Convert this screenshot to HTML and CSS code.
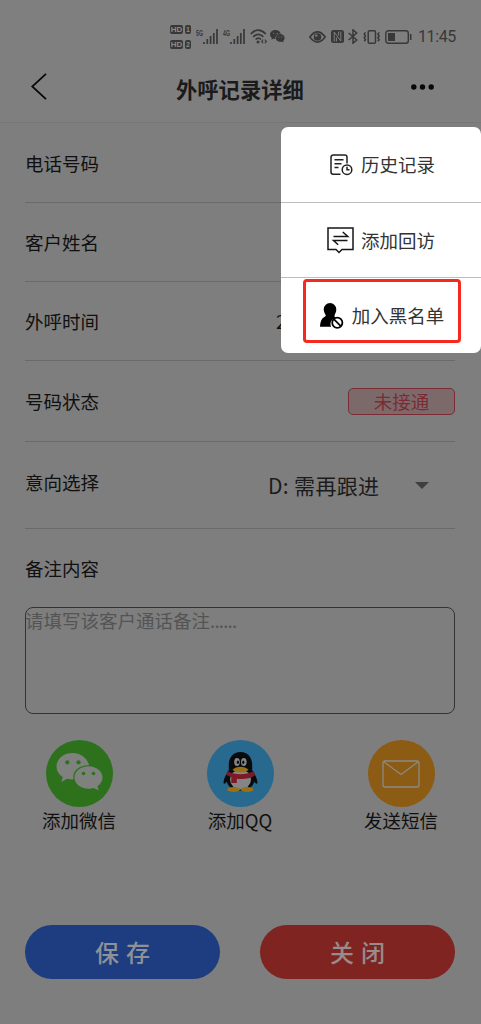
FILE: index.html
```html
<!DOCTYPE html>
<html lang="zh-CN">
<head>
<meta charset="utf-8">
<title>外呼记录详细</title>
<link rel="stylesheet" href="styles.css">
</head>
<body>
<div class="screen">
  <div class="statusbar">
    <div class="hd-stack">
      <div class="hd-row"><span class="hd">HD</span><span class="sim">1</span></div>
      <div class="hd-row"><span class="hd">HD</span><span class="sim">2</span></div>
    </div>
    <div class="signal">
      <span class="net">5G</span>
      <svg width="15" height="15" viewBox="0 0 15 15"><path d="M1 13v2M4.3 10v5M7.6 7v8M10.8 4v11M14 0v15"/></svg>
    </div>
    <div class="signal">
      <span class="net">4G</span>
      <svg width="15" height="15" viewBox="0 0 15 15"><path d="M1 13v2M4.3 10v5M7.6 7v8M10.8 4v11M14 0v15"/></svg>
    </div>
    <svg class="wifi" width="17" height="15" viewBox="0 0 17 15" fill="none" stroke="currentColor" stroke-width="1.7">
      <path d="M.7 5Q8.2-2.7 15.800 5M3.200 7.800q5-5 10.200 0M5.600 10.500q2.700-2.600 5.400 0"/>
      <circle cx="8" cy="13" r="1.500" fill="currentColor" stroke="none"/>
      <path d="M13.200 10.600L11.600 12.500l1.600 1.700M14.800 10.600l1.600 1.900-1.600 1.700" stroke-width="1.100"/>
    </svg>
    <svg class="chat" width="15" height="13" viewBox="0 0 15 13" fill="currentColor">
      <path d="M5.500 0C2.500 0 0 2 0 4.600c0 1.500.8 2.600 1.900 3.400L1.300 9.800l2-1 2 .3C5 5.800 7.400 3.500 10.800 3.700 10.200 1.500 8 0 5.500 0z"/>
      <ellipse cx="10.200" cy="8" rx="4.400" ry="3.900"/><path d="M11 11l2.500 1.500-.5-3z"/>
      <circle cx="3.700" cy="3.300" r=".6" fill="#7f7f7f"/><circle cx="7.200" cy="3.300" r=".6" fill="#7f7f7f"/>
      <circle cx="8.800" cy="7" r=".5" fill="#7f7f7f"/><circle cx="11.700" cy="7" r=".5" fill="#7f7f7f"/>
    </svg>
    <svg class="eye" width="17" height="12" viewBox="0 0 17 12" fill="none" stroke="currentColor" stroke-width="1.600">
      <path d="M.8 6Q8.500-4.200 16.200 6 8.500 16.200.8 6z"/><circle cx="8.500" cy="6" r="3.800" fill="currentColor" stroke="none"/><circle cx="7.300" cy="4.600" r="1.200" fill="#7f7f7f" stroke="none"/>
    </svg>
    <svg class="nfc" width="13" height="13" viewBox="0 0 13 13">
      <rect width="13" height="13" rx="2.500" fill="currentColor"/><path d="M3.200 11.500V2l6.600 9V1.500M5.400 11.500V7.500M7.600 1.500v4" fill="none" stroke="#7f7f7f" stroke-width="1"/>
    </svg>
    <svg class="bt" width="10" height="15" viewBox="0 0 10 15" fill="none" stroke="currentColor" stroke-width="1.500"><path d="M.7 4l8 7L5 14.200V.8l3.700 3.200-8 7"/></svg>
    <svg class="vib" width="18" height="14" viewBox="0 0 18 14" fill="none" stroke="currentColor" stroke-width="1.500">
      <rect x="5.200" y=".8" width="7.300" height="12.400" rx="1.300"/><path d="M2.500 2.300L1.200 4.200l1.300 1.700-1.300 1.900 1.300 1.900-1.300 1.600M16.200 2.300l-1.300 1.900 1.300 1.700-1.300 1.900 1.300 1.900-1.300 1.600"/>
    </svg>
    <svg class="battery" width="27" height="14" viewBox="0 0 27 14" fill="none" stroke="currentColor" stroke-width="1.400">
      <rect x=".8" y=".8" width="22.500" height="12.400" rx="2.500"/><rect x="3" y="3" width="7" height="8" fill="currentColor" stroke="none"/><path d="M25.700 4v6" stroke-width="1.600"/>
    </svg>
    <span class="clock">11:45</span>
  </div>

  <header class="header">
    <svg class="back" width="16" height="27" viewBox="0 0 16 27"><path d="M15 .8L1.200 13.500 15 26.200" fill="none" stroke="#080808" stroke-width="1.800"/></svg>
    <h1 class="title">外呼记录详细</h1>
    <svg class="more" width="23" height="6" viewBox="0 0 23 6"><circle cx="2.800" cy="3" r="2.700"/><circle cx="11.500" cy="3" r="2.700"/><circle cx="20.200" cy="3" r="2.700"/></svg>
  </header>

  <main class="form">
    <div class="row row-phone"><span>电话号码</span></div>
    <div class="row"><span>客户姓名</span></div>
    <div class="row"><span>外呼时间</span><span class="time">2</span></div>
    <div class="row row-state"><span>号码状态</span><span class="badge">未接通</span></div>
    <div class="row row-intent"><span class="intent-label">意向选择</span><span class="select">D: 需再跟进<i class="caret"></i></span></div>
    <div class="note-label">备注内容</div>
    <div class="note">请填写该客户通话备注<span class="dots">......</span></div>

    <div class="actions">
      <div class="action">
        <svg width="67" height="67" viewBox="0 0 67 67">
          <circle cx="33.500" cy="33.500" r="33.500" fill="#2d711d"/>
          <path d="M26.500 13C17.500 13 10.500 19 10.500 26.500c0 4.500 2.300 8 6.300 10.500l-1.500 5 6-3.200c2 .6 4 .8 6.200.7C26 31 33 24.800 43 25.200 41.500 18 34.500 13 26.500 13z" fill="#7f817e"/>
          <path d="M42.500 26.200c-8 0-14 5-14 11.300s6 11.200 14 11.200c2 0 3.500-.3 5.200-.8l5 2.600-1.300-4.300c3.300-2.200 5.100-5.200 5.100-8.700 0-6.300-6-11.300-14-11.300z" fill="#7f817e"/>
          <g fill="#2d711d"><circle cx="21.300" cy="22.300" r="2.100"/><circle cx="32.500" cy="22.300" r="2.100"/><circle cx="37.500" cy="33.500" r="1.800"/><circle cx="47.500" cy="33.500" r="1.800"/></g>
        </svg>
        <span>添加微信</span>
      </div>
      <div class="action">
        <svg width="67" height="67" viewBox="0 0 67 67">
          <circle cx="33.500" cy="33.500" r="33.500" fill="#286990"/>
          <path d="M21.500 31c-3 4-5.500 9-4.800 12.300.5 1.200 2.500-.3 4.300-3.300zM45.500 31c3 4 5.500 9 4.800 12.300-.5 1.200-2.500-.3-4.300-3.300z" fill="#080a0c"/>
          <path d="M33.500 12C26 12 21.800 17.500 21.800 25v5c-1.700 3-2.300 6-2.300 9 0 7 6 11.500 14 11.500s14-4.500 14-11.500c0-3-.6-6-2.300-9v-5c0-7.500-4.200-13-11.700-13z" fill="#080a0c"/>
          <ellipse cx="33.500" cy="39.500" rx="10.500" ry="10" fill="#858585"/>
          <ellipse cx="26.500" cy="49.500" rx="6.300" ry="2.600" fill="#987016"/><ellipse cx="40.200" cy="49.500" rx="6.300" ry="2.600" fill="#987016"/>
          <path d="M20.300 31c8 4.300 18 4.300 26.500 0l1 4.500c-5 3.500-12 4-18 3.200V43h-5.500v-6c-2-.6-3.500-1.300-5-2z" fill="#7d1926"/>
          <ellipse cx="30" cy="22" rx="2.800" ry="4.100" fill="#858585"/><ellipse cx="36.800" cy="22" rx="2.800" ry="4.100" fill="#858585"/>
          <ellipse cx="30.900" cy="22.300" rx="1.100" ry="1.700" fill="#080a0c"/><ellipse cx="36.300" cy="22.300" rx="1.100" ry="1.700" fill="#080a0c"/>
          <path d="M25.500 29.800c3.500-4 12.500-4 16 0-3.500 3.500-12.500 3.500-16 0z" fill="#987016"/>
        </svg>
        <span>添加QQ</span>
      </div>
      <div class="action">
        <svg width="67" height="67" viewBox="0 0 67 67">
          <circle cx="33.500" cy="33.500" r="33.500" fill="#8c5b14"/>
          <g fill="none" stroke="#8b8a86" stroke-width="1.300"><rect x="15" y="21" width="36" height="26" rx="2"/><path d="M15.800 21.800L33 34.500l17.200-12.700"/></g>
        </svg>
        <span>发送短信</span>
      </div>
    </div>

    <div class="buttons">
      <div class="btn save">保 存</div>
      <div class="btn close">关 闭</div>
    </div>
  </main>

  <div class="menu">
    <div class="item">
      <svg class="ic-history" width="23" height="22" viewBox="0 0 23 22" fill="none" stroke="#222" stroke-width="1.500">
        <path d="M10.500 20.200H3.200a2.200 2.200 0 0 1-2.200-2.200V3.200A2.200 2.200 0 0 1 3.200 1h11.600A2.200 2.200 0 0 1 17 3.200v6.300M4.500 5.800h9M4.500 9.800h7M4.500 13.500h4"/><circle cx="17" cy="15.700" r="4.800"/><path d="M17 12.800v3h2.500"/>
      </svg>
      <span>历史记录</span>
    </div>
    <div class="item">
      <svg class="ic-visit" width="27" height="27" viewBox="0 0 27 27" fill="none" stroke="#161616" stroke-width="1.500">
        <path d="M1 1h25v21.500H15l-3 3-3-3H1zM6.500 9.500h14.300L15.800 5M20.500 13.500H6.500l4.700 4.200"/>
      </svg>
      <span>添加回访</span>
    </div>
    <div class="item">
      <svg class="ic-block" width="24" height="26" viewBox="0 0 24 26">
        <path d="M10 0a6.300 6.300 0 0 1 6.300 6.500c0 3.500-1.800 4.600-1.800 6.500 0 1 .8 1.600 1.800 2-3.500.5-5.800 3-5.800 6 0 1 .2 2 .7 2.800H0c.2-5 1.300-8 4.200-9.800 1-.6 1.500-.6 1.500-1.500 0-1.300-2-2.800-2-6A6.300 6.300 0 0 1 10 0z"/>
        <g fill="none" stroke="#000" stroke-width="1.800"><circle cx="17.300" cy="19.700" r="5.100"/><path d="M13.800 16.200l7 7"/></g>
      </svg>
      <span>加入黑名单</span>
    </div>
    <div class="highlight"></div>
  </div>
</div>
</body>
</html>
```

FILE: styles.css
```css
* { box-sizing: border-box; }

body {
  margin: 0;
  background: #7e7e7e;
  font-family: "Noto Sans CJK SC", "Noto Sans", sans-serif;
  color: #101010;
}

.screen {
  position: relative;
  width: 481px;
  height: 1024px;
  overflow: hidden;
  background: #7e7e7e;
}

/* Status bar */
.statusbar {
  display: flex;
  align-items: center;
  height: 60px;
  padding: 13px 0 0 170px;
  background: #7f7f7f;
  color: #383838;
}

.statusbar svg { flex: none; }

.hd-stack {
  display: flex;
  flex-direction: column;
  gap: 6px;
  width: 21px;
}

.hd-row { display: flex; gap: 2px; }

.hd, .sim {
  height: 9px;
  border-radius: 2px;
  background: #383838;
  color: #8c8c8c;
  font: bold 8px/9px "Liberation Sans", sans-serif;
  text-align: center;
}

.hd { width: 13px; }
.sim { width: 6px; font-size: 7px; }

.signal { display: flex; width: 22px; margin-left: 5px; }
.signal svg { stroke: currentColor; stroke-width: 1.7; }

.net {
  flex: none;
  width: 7px;
  height: 8px;
  font: bold 9px/8px "Liberation Sans", sans-serif;
  transform: scaleX(.58);
  transform-origin: left;
}

.wifi { margin-left: 5px; }
.chat { margin-left: 3px; }
.eye { margin-left: 24px; }
.nfc { margin-left: 5px; }
.bt { margin-left: 4px; }
.vib { margin-left: 5px; }
.battery { margin-left: 4px; }

.clock {
  margin-left: 6px;
  font: 16px/20px Roboto, sans-serif;
  letter-spacing: -.4px;
}

/* Header */
.header {
  display: flex;
  align-items: flex-start;
  height: 63px;
  padding-left: 31px;
  border-bottom: 1px solid #777;
  background: #7f7f7f;
}

.back { margin-top: 13px; }

.title {
  width: 128px;
  margin: 14px 0 0 129px;
  color: #1b1b1b;
  font-size: 21.3px;
  font-weight: 700;
  line-height: 30px;
  white-space: nowrap;
}

.more { margin: 24px 0 0 107px; fill: #080808; }

/* Form */
.form { padding: 0 26px 0 25px; }

.row {
  display: flex;
  align-items: center;
  justify-content: space-between;
  height: 79px;
  border-bottom: 1px solid #6a6a6a;
  font-size: 18.5px;
  line-height: 28px;
}

.row-phone { height: 80px; }
.row-state { height: 81px; }
.row-intent { height: 87px; }
.intent-label { margin-bottom: 7px; }

.time { width: 179px; font-size: 18px; }

.badge {
  width: 107px;
  height: 27px;
  border: 1px solid #7c2a36;
  border-radius: 5px;
  background: #7c6a6a;
  color: #7c2a34;
  text-align: center;
  line-height: 25px;
}

.select {
  display: flex;
  align-items: center;
  width: 187px;
  color: #1b1b1b;
  font-size: 21px;
  letter-spacing: .35px;
  white-space: nowrap;
}

.caret {
  margin: 1px 0 0 36px;
  border: 7px solid transparent;
  border-top-color: #3f3f3f;
  border-bottom: 0;
}

.note-label {
  height: 78px;
  padding-top: 25px;
  font-size: 18.5px;
  line-height: 28px;
}

.note {
  height: 107px;
  border: 1px solid #333;
  border-radius: 8px;
  color: #545454;
  font-size: 18.5px;
  line-height: 24px;
  text-indent: -1px;
}

.dots { letter-spacing: -.75px; }

/* Contact shortcuts */
.actions {
  display: flex;
  justify-content: space-between;
  margin: 26px 17px 0;
}

.action {
  display: flex;
  flex-direction: column;
  align-items: center;
  width: 74px;
  font-size: 18.5px;
  line-height: 27px;
  white-space: nowrap;
}

.action svg { display: block; }

/* Bottom buttons */
.buttons {
  display: flex;
  justify-content: space-between;
  margin-top: 91px;
}

.btn {
  width: 195px;
  height: 54px;
  border-radius: 27px;
  font-size: 24px;
  font-weight: 500;
  line-height: 54px;
  text-align: center;
  word-spacing: 1.5px;
}

.save { background: #1d3d80; color: #8e9198; }
.close { background: #7f2420; color: #988b8b; }

/* Popup menu */
.menu {
  position: absolute;
  top: 127px;
  left: 281px;
  width: 200px;
  height: 226px;
  border-radius: 7px;
  background: #fff;
}

.item {
  display: flex;
  align-items: center;
  justify-content: center;
  height: 75px;
  color: #333;
  font-size: 18.5px;
  line-height: 28px;
}

.item span { margin-bottom: 1px; }

.item:first-child { height: 76px; padding-left: 3px; }
.item:nth-child(2) { padding-top: 1px; }
.item:nth-child(3) { padding-left: 2px; }

.item:not(:nth-child(3)) { border-bottom: 1px solid #bdbdbd; }

.ic-history { margin-right: 8px; }
.ic-visit { margin-right: 7px; }
.ic-block { margin-right: 8px; }

.highlight {
  position: absolute;
  top: 152px;
  left: 22px;
  width: 158px;
  height: 64px;
  border: 3px solid #f5291d;
  border-radius: 4px;
}
```
